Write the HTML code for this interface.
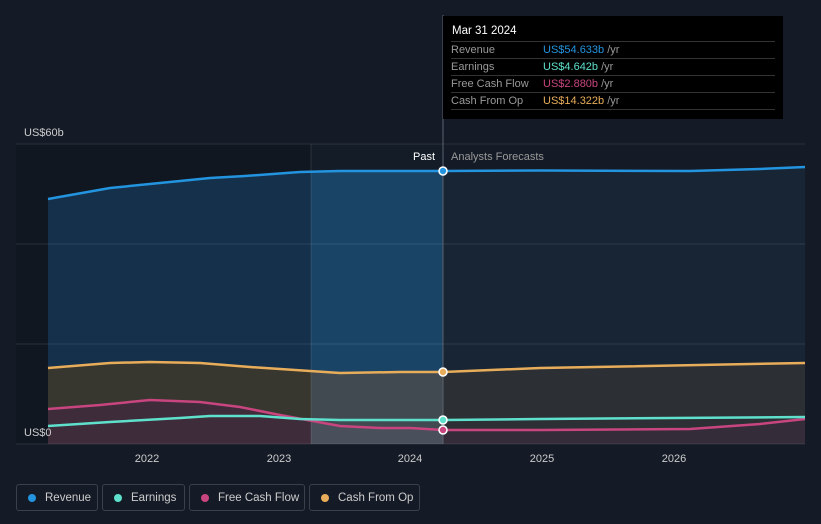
<!DOCTYPE html>
<html><head><style>
body{margin:0;background:#151b26;font-family:"Liberation Sans",sans-serif;}
.wrap{position:relative;width:821px;height:524px;overflow:hidden;background:#151b26;}
.tip{position:absolute;left:443px;top:16px;width:340px;height:103px;background:#000;color:#fff;font-size:11px;}
.tip .h{position:absolute;left:9px;top:9px;font-size:11.5px;}
.row{position:absolute;left:8px;width:324px;height:17px;border-top:1px solid #333;line-height:17px;}
.row span.l{color:#999;position:absolute;left:0}
.row span.v{position:absolute;left:92px}
.leg{position:absolute;top:484px;height:27px;border:1px solid #3a404c;border-radius:3px;color:#ccc;font-size:11.5px;line-height:27px;box-sizing:border-box;}
.leg i{position:absolute;left:11px;top:9px;width:8px;height:8px;border-radius:50%;}
.leg span{position:absolute;left:28px;}
</style></head><body><div class="wrap">
<svg width="821" height="524" style="position:absolute;left:0;top:0">
<defs><clipPath id="past"><rect x="0" y="0" width="443" height="524"/></clipPath>
<clipPath id="hl"><rect x="311" y="0" width="132" height="524"/></clipPath>
<clipPath id="fc"><rect x="443" y="0" width="400" height="524"/></clipPath></defs>
<rect x="16" y="144" width="295" height="300" fill="#111720"/>
<rect x="311" y="144" width="132" height="300" fill="#141c28"/>
<g clip-path="url(#past)">
<path d="M48,199 L110,188 L180,181 L210,178 L245,176 L300,172 L340,171 L443,171 L443,444 L48,444Z" fill="#15304a"/>
<path d="M48,368 L110,363 L150,362 L200,363 L250,367 L340,373 L400,372 L443,372 L443,444 L48,444Z" fill="#37372f"/>
<path d="M48,409 L100,405 L150,400 L200,402 L240,407 L280,415 L340,426 L443,430 L443,444 L48,444Z" fill="#3f2c3a"/>
</g>
<g clip-path="url(#hl)">
<path d="M300,172 L340,171 L443,171 L443,444 L300,444Z" fill="#1a4466"/>
<path d="M250,367 L340,373 L400,372 L443,372 L443,444 L250,444Z" fill="#414a50"/>
<path d="M280,415 L340,426 L443,430 L443,444 L280,444Z" fill="#4a4f5c"/>
</g>
<g clip-path="url(#fc)">
<path d="M443,171 L540,170.5 L690,171 L760,169 L805,167 L805,444 L443,444Z" fill="#172535"/>
<path d="M443,372 L540,368 L805,363 L805,444 L443,444Z" fill="#2c3034"/>
<path d="M443,430 L540,430 L690,429 L760,424 L805,419 L805,444 L443,444Z" fill="#352c3a"/>
</g>
<g stroke="#ffffff" stroke-opacity="0.1">
<line x1="16" y1="144" x2="805" y2="144"/>
<line x1="16" y1="244" x2="805" y2="244"/>
<line x1="16" y1="344" x2="805" y2="344"/>
<line x1="16" y1="444" x2="805" y2="444"/>
<line x1="311" y1="144" x2="311" y2="444"/>
</g>
<line x1="443" y1="15" x2="443" y2="444" stroke="#5a6270"/>
<g fill="none" stroke-width="2.5">
<path d="M48,199 L110,188 L180,181 L210,178 L245,176 L300,172 L340,171 L443,171 L540,170.5 L690,171 L760,169 L805,167" stroke="#2394df"/>
<path d="M48,368 L110,363 L150,362 L200,363 L250,367 L340,373 L400,372 L443,372 L540,368 L805,363" stroke="#e8ad5a"/>
<path d="M48,409 L100,405 L150,400 L200,402 L240,407 L280,415 L340,426 L380,428 L410,428 L443,430 L540,430 L690,429 L760,424 L805,419" stroke="#c8457f"/>
<path d="M48,426 L110,422 L180,418 L210,416 L260,416 L300,419 L340,420 L380,420 L443,420 L540,419 L805,417" stroke="#5ee0cc"/>
</g>
<circle cx="443" cy="171" r="4" fill="#2394df" stroke="#fff" stroke-width="1.5"/>
<circle cx="443" cy="372" r="4" fill="#e8ad5a" stroke="#fff" stroke-width="1.5"/>
<circle cx="443" cy="420" r="4" fill="#5ee0cc" stroke="#fff" stroke-width="1.5"/>
<circle cx="443" cy="430" r="4" fill="#c8457f" stroke="#fff" stroke-width="1.5"/>
<g font-family="Liberation Sans" font-size="11" fill="#ccc">
<text x="24" y="136">US$60b</text>
<text x="24" y="436">US$0</text>
<text x="435" y="160" text-anchor="end" fill="#fff">Past</text>
<text x="451" y="160" fill="#999">Analysts Forecasts</text>
<text x="147" y="462" text-anchor="middle">2022</text>
<text x="279" y="462" text-anchor="middle">2023</text>
<text x="410" y="462" text-anchor="middle">2024</text>
<text x="542" y="462" text-anchor="middle">2025</text>
<text x="674" y="462" text-anchor="middle">2026</text>
</g>
</svg>
<div class="tip"><div class="h">Mar 31 2024</div>
<div class="row" style="top:25px"><span class="l">Revenue</span><span class="v"><b style="font-weight:normal;color:#2394df">US$54.633b</b> <span style="color:#999">/yr</span></span></div>
<div class="row" style="top:42px"><span class="l">Earnings</span><span class="v"><b style="font-weight:normal;color:#5ee0cc">US$4.642b</b> <span style="color:#999">/yr</span></span></div>
<div class="row" style="top:59px"><span class="l">Free Cash Flow</span><span class="v"><b style="font-weight:normal;color:#c8457f">US$2.880b</b> <span style="color:#999">/yr</span></span></div>
<div class="row" style="top:76px"><span class="l">Cash From Op</span><span class="v"><b style="font-weight:normal;color:#e8ad5a">US$14.322b</b> <span style="color:#999">/yr</span></span></div>
<div class="row" style="top:93px;height:0"></div>
</div>
<div class="leg" style="left:16px;width:82px"><i style="background:#2394df"></i><span>Revenue</span></div>
<div class="leg" style="left:102px;width:83px"><i style="background:#5ee0cc"></i><span>Earnings</span></div>
<div class="leg" style="left:189px;width:116px"><i style="background:#c8457f"></i><span>Free Cash Flow</span></div>
<div class="leg" style="left:309px;width:111px"><i style="background:#e8ad5a"></i><span>Cash From Op</span></div>
</div></body></html>
